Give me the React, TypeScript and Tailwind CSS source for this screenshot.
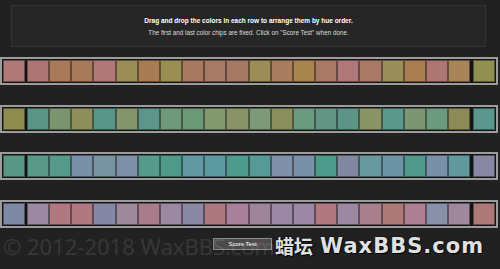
import React from "react";

const rows = [
  {
    first: "#b07878",
    last: "#909050",
    chips: [
      "#ad7574", "#a87a5a", "#a87a5c", "#b07878", "#9c8c58", "#a87c52", "#9a8e52", "#a87860", "#a67a64", "#a57866",
      "#9c8c58", "#a87c5e", "#a8844e", "#a87a66", "#b07878", "#a87a66", "#9a8e5a", "#a87e52", "#ad7672", "#a8845a",
    ],
  },
  {
    first: "#8f8c50",
    last: "#5a968c",
    chips: [
      "#5a9482", "#7a9470", "#8c8e5c", "#589488", "#84946c", "#5c968a", "#70987a", "#6c9878", "#849870", "#889468",
      "#7c9a78", "#8a8e5c", "#6c9a80", "#649484", "#5e9488", "#8a9466", "#5a988c", "#7c9672", "#6c9a7e", "#8c8a58",
    ],
  },
  {
    first: "#5a9684",
    last: "#8888a4",
    chips: [
      "#5a9888", "#56988a", "#7890a8", "#7894a0", "#7c90a8", "#569a8c", "#509888", "#6498a0", "#5c98a0", "#4e9a8c",
      "#569a98", "#8090a8", "#7890a8", "#4e9a8a", "#8088a0", "#6898a0", "#6c94a4", "#50988c", "#7890a8", "#60989e",
    ],
  },
  {
    first: "#7c88a4",
    last: "#ac7878",
    chips: [
      "#9a88a0", "#b07880", "#b07880", "#8488a4", "#a0889c", "#a87c8a", "#9c88a0", "#8a88a4", "#ac7880", "#a8809a",
      "#a0849a", "#9a88a4", "#9a88a4", "#b07880", "#9c88a0", "#a8808e", "#ac7878", "#ac8090", "#8890a8", "#a0889c",
    ],
  },
];

const Chip = ({ color, fixed }: { color: string; fixed?: boolean }) => (
  <div
    className={fixed ? "w-[22px] h-[22px] border border-black/40" : "flex-1 h-[22px] border border-black/40"}
    style={{ backgroundColor: color }}
  />
);

const App = () => {
  return (
    <div className="relative w-[500px] h-[269px] overflow-hidden bg-[#212121] font-['Liberation_Sans',Arial,sans-serif]">
      <div className="ml-[11px] mt-[5px] w-[475px] h-[42px] border border-[#333333] bg-[#262626] flex flex-col items-center pt-[10px]">
        <p className="text-[6.5px] leading-[9px] font-bold text-white">
          Drag and drop the colors in each row to arrange them by hue order.
        </p>
        <p className="mt-[4px] text-[6.3px] leading-[8px] text-[#dddddd]">
          The first and last color chips are fixed. Click on "Score Test" when done.
        </p>
      </div>

      <div className="mt-[10px] flex flex-col gap-[19.5px]">
        {rows.map((row, i) => (
          <div key={i} className="w-[498px] border-2 border-[#9c9c9c] bg-[#141414] p-px flex">
            <Chip color={row.first} fixed />
            <div className="flex flex-1 ml-[2px] mr-[3px]">
              {row.chips.map((c, j) => (
                <Chip key={j} color={c} />
              ))}
            </div>
            <Chip color={row.last} fixed />
          </div>
        ))}
      </div>

      <button className="mt-[10.5px] ml-[213px] w-[59px] h-[12px] border border-[#8a8a8a] bg-[#4c4c4c] text-[6px] leading-[10px] text-white">
        Score Test
      </button>

      <div className="pointer-events-none absolute left-[3px] top-[231px] text-[22px] leading-[30px] text-white/10 font-['Open_Sans',sans-serif]">
        © 2012-2018 WaxBBS.com
      </div>
      <div className="pointer-events-none absolute left-[275px] top-[233px] flex items-center gap-[7px] text-[#e0e0e0] [text-shadow:0_0_2px_#000,1px_1px_0_#000]">
        <span className="text-[19px] leading-[26px] font-bold font-['Noto_Sans_CJK_SC',sans-serif]">蜡坛</span>
        <span className="text-[21px] leading-[26px] font-bold tracking-[1px] font-['DejaVu_Sans',sans-serif]">WaxBBS.com</span>
      </div>
    </div>
  );
};

export default App;
